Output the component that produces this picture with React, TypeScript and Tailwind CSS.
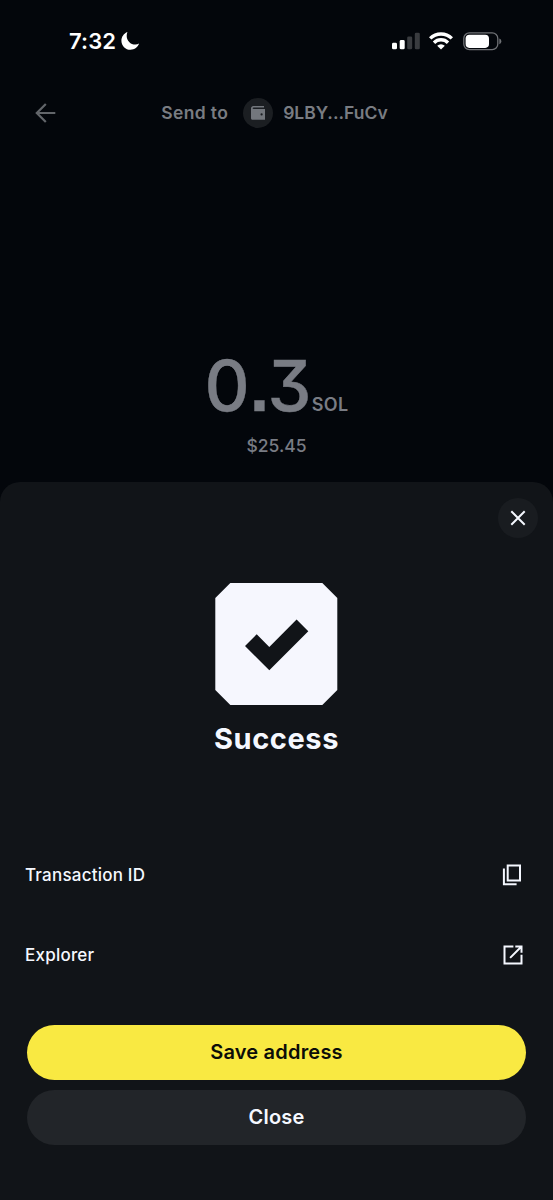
import { useState } from 'react'

const TX = { to: '9LBY...FuCv', whole: '0', decimals: '3', token: 'SOL', usd: '$25.45' }

function StatusBar() {
  return (
    <div className="h-[82px] pl-[69px] pr-[51px] flex items-center justify-between text-white">
      <div className="flex items-center gap-[5px]">
        <span className="text-[22px] leading-none font-semibold tracking-[0.1px]">7:32</span>
        <svg width="20" height="20" viewBox="0 0 20 20" fill="currentColor">
          <path d="M6.4 1C2.9 2.4.4 5.8.4 9.7c0 5.1 4 9.1 9.1 9.1 4 0 7.4-2.6 8.6-6.2-1.1.6-2.4.9-3.7.9-4.9 0-8.7-3.8-8.7-8.6 0-1.4.2-2.7.7-3.9Z" />
        </svg>
      </div>
      <div className="flex items-center">
        <svg width="28" height="18" viewBox="0 0 28 18" fill="currentColor">
          <rect x="0" y="10.8" width="5" height="6.5" rx="1.4" />
          <rect x="7.7" y="8" width="5" height="9.3" rx="1.4" />
          <rect x="15.2" y="4.4" width="5" height="12.9" rx="1.4" fill="#393b3f" />
          <rect x="22.8" y="0.7" width="5" height="16.6" rx="1.4" fill="#393b3f" />
        </svg>
        <svg width="24" height="18" viewBox="0 0 24 18" fill="none" stroke="currentColor" strokeWidth="3.4" className="ml-[9px]">
          <path d="M1.2 6.4a15.3 15.3 0 0 1 21.6 0" />
          <path d="M5 10.7a9.9 9.9 0 0 1 14 0" />
          <path d="M12 17.5 8.2 13.8a5.4 5.4 0 0 1 7.6 0Z" fill="currentColor" stroke="none" />
        </svg>
        <svg width="39" height="19" viewBox="0 0 39 19" fill="none" className="ml-[10px]">
          <rect x="0.8" y="0.9" width="34" height="16.8" rx="5.6" stroke="#707276" strokeWidth="1.3" />
          <rect x="2.6" y="2.7" width="23.4" height="13.2" rx="3.8" fill="currentColor" />
          <path d="M36.3 6.4c1.3.4 2 1.6 2 2.9s-.7 2.5-2 2.9Z" fill="#707276" />
        </svg>
      </div>
    </div>
  )
}

function WalletIcon() {
  return (
    <div className="w-[30px] h-[30px] rounded-full bg-[#1b1e22] flex items-center justify-center">
      <svg width="16" height="16" viewBox="0 0 16 16">
        <path d="M1 3.5C1 2 2 1.1 3.4 1.1H14v1.4H3.8c-.8 0-1.2.3-1.2.8s.4.8 1.2.8H15v10.7H2.5C1.6 14.8 1 14.2 1 13.3Z" fill="#73777d" />
        <circle cx="11.6" cy="9.4" r="1.1" fill="#1b1e22" />
      </svg>
    </div>
  )
}

function CopyIcon() {
  return (
    <svg width="20" height="22" viewBox="0 0 20 22" fill="none" stroke="currentColor" strokeWidth="2">
      <path d="M5.7 1.4H18v15.2H5.7Z" />
      <path d="M1.9 4.6v15.7h12.7" />
    </svg>
  )
}

function ExternalIcon() {
  return (
    <svg width="20" height="20" viewBox="0 0 20 20" fill="none" stroke="currentColor" strokeWidth="2">
      <path d="M10.4 1.5H1.5v17h17V9.7" />
      <path d="M12.3 1.5h6.2v6.2M18.2 1.8 7.1 12.9" />
    </svg>
  )
}

export default function App() {
  const [copied, setCopied] = useState(false)

  return (
    <div className="w-full h-[1200px] flex flex-col overflow-hidden bg-[#03060b] font-['Inter',sans-serif]">
      <StatusBar />

      {/* Header */}
      <div className="h-[62px] px-[35px] grid grid-cols-[21px_1fr_21px] items-center text-[#797c82]">
        <svg width="21" height="20" viewBox="0 0 21 20" fill="none" stroke="#62656a" strokeWidth="2.2">
          <path d="M20.3 10H2M10.8 1 1.8 10l9 9" />
        </svg>
        <div className="flex items-center justify-center text-[17.5px] font-semibold -ml-1">
          <span className="tracking-[0.35px]">Send to</span>
          <span className="ml-[15px] mr-[10px]"><WalletIcon /></span>
          <span>{TX.to}</span>
        </div>
      </div>

      {/* Amount */}
      <div className="h-[338px] pt-[206px] flex flex-col items-center text-[#797c84]">
        <div className="flex items-baseline leading-[72px]">
          <span className="text-[70px] font-medium [-webkit-text-stroke:0.4px_#797c84] [font-feature-settings:'cv09'_1]">
            {TX.whole}
            <span className="font-['Liberation_Sans',sans-serif] font-bold tracking-[-1.5px]">.</span>
            {TX.decimals}
          </span>
          <span className="text-[18px] font-semibold tracking-[0.4px]">{TX.token}</span>
        </div>
        <div className="text-[17.5px] leading-6 font-medium -mt-[7px]">{TX.usd}</div>
      </div>

      {/* Sheet */}
      <div className="flex-1 flex flex-col rounded-t-[20px] bg-[#111418] text-[#f5f8ff] px-[27px]">
        <div className="flex justify-end pt-[15.5px] -mr-[11.5px]">
          <button className="w-10 h-10 rounded-full bg-[#191c20] flex items-center justify-center">
            <svg width="16" height="16" viewBox="0 0 16 16" fill="none" stroke="currentColor" strokeWidth="2">
              <path d="m1.3 1.3 13.4 13.4M14.7 1.3 1.3 14.7" />
            </svg>
          </button>
        </div>

        <div className="flex flex-col items-center mt-[45.5px]">
          <svg width="123" height="122" viewBox="0 0 123 122">
            <path d="M15.3 0h92l15 15v92l-15 15h-92l-15-15V15Z" fill="#f6f7fe" />
            <path d="M30 63 41.7 51.3 54.3 63.9 81.6 36.6 93.3 48.3 54.3 87.3Z" fill="#111418" />
          </svg>
          <h1 className="text-[29px] leading-9 font-bold tracking-[0.6px] mt-[16px]">Success</h1>
        </div>

        <div className="mt-[77.5px] -mx-0.5 text-[17px] font-medium tracking-[0.22px]">
          <button onClick={() => setCopied(!copied)} className="w-full h-20 flex items-center justify-between pr-[6px]">
            <span className="pt-0.5">Transaction ID</span>
            <CopyIcon />
          </button>
          <button className="w-full h-20 flex items-center justify-between pr-[5px]">
            <span className="pt-0.5">Explorer</span>
            <ExternalIcon />
          </button>
        </div>

        <div className="mt-[30px] flex flex-col gap-2.5 text-[20px] font-semibold tracking-[0.2px]">
          <button className="h-[55px] rounded-full bg-[#f9e942] text-[#0c0d08]">Save address</button>
          <button className="h-[55px] rounded-full bg-[#222529]">Close</button>
        </div>
      </div>
    </div>
  )
}
